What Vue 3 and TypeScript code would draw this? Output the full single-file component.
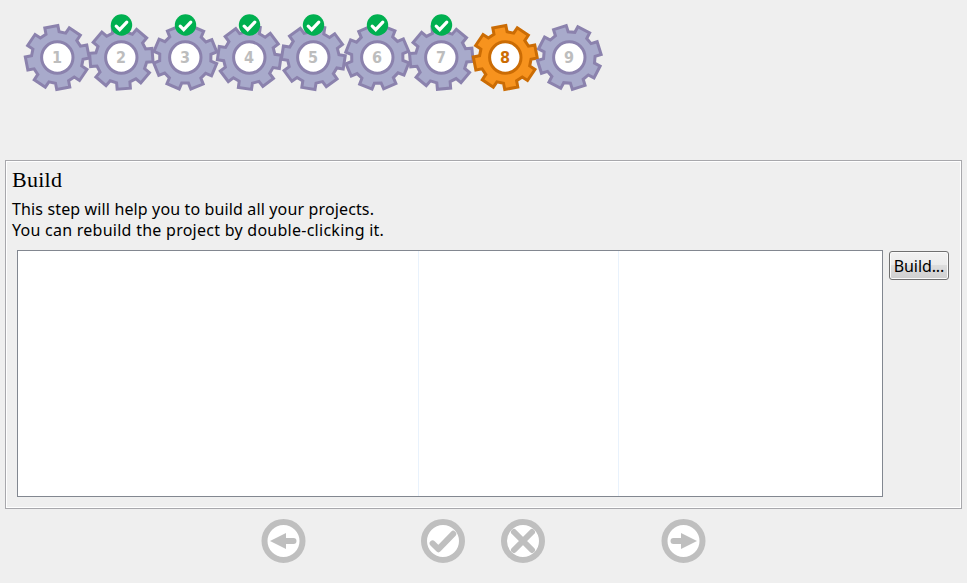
<script setup lang="ts">
interface Step {
  id: number
  rotation: number
  done: boolean
  current: boolean
}

const rotations: number[] = [-11, -4.5, -22, 8, 9, 21.5, -5, -11, -17.5]
const currentStep = 8

const steps: Step[] = rotations.map((rotation, i) => ({
  id: i + 1,
  rotation,
  done: i > 0 && i + 1 < currentStep,
  current: i + 1 === currentStep,
}))

function gearPoints(teeth: number): string {
  const corners: [number, number][] = [
    [25.8, -15],
    [32, -12],
    [32, 12],
    [25.8, 15],
  ]
  const points: string[] = []
  for (let t = 0; t < teeth; t++) {
    for (const [radius, offset] of corners) {
      const angle = ((t * 360) / teeth + offset - 90) * (Math.PI / 180)
      points.push(`${(radius * Math.cos(angle)).toFixed(2)},${(radius * Math.sin(angle)).toFixed(2)}`)
    }
  }
  return points.join(' ')
}

const gear = gearPoints(8)
</script>

<template>
  <main class="wizard">
    <nav class="steps">
      <div v-for="step in steps" :key="step.id" class="step" :class="{ current: step.current }">
        <svg class="gear" viewBox="-35.3 -49.5 70 84" width="70" height="84">
          <polygon class="body" :points="gear" :transform="`rotate(${step.rotation})`" />
          <circle class="hub" r="15.7" />
          <text class="number" x="-0.3" y="5.5" text-anchor="middle">{{ step.id }}</text>
          <g v-if="step.done" transform="translate(0.2 -32.5)">
            <circle class="badge" r="10.7" />
            <path class="tick" d="M-5.3 1.2 L-1.8 4.6 L5.3 -2.9" />
          </g>
        </svg>
      </div>
    </nav>

    <section class="panel">
      <h1 class="title">Build</h1>
      <p class="text"><span class="line first">This step will help you to build all your projects.</span><span class="line second">You can rebuild the project by double-clicking it.</span></p>
      <div class="content">
        <div class="table">
          <div class="column"></div>
          <div class="column"></div>
          <div class="column"></div>
        </div>
        <button class="build" type="button">Build...</button>
      </div>
    </section>

    <footer class="controls">
      <button class="round" type="button" aria-label="Previous">
        <svg viewBox="-21.5 -22 44 44" width="44" height="44">
          <circle class="ring" r="19" />
          <path class="solid" d="M-13.5 0 L2.5 -8 V-3 H10 A3 3 0 0 1 10 3 H2.5 V8 Z" />
        </svg>
      </button>
      <button class="round finish" type="button" aria-label="Finish">
        <svg viewBox="-22 -22 44 44" width="44" height="44">
          <circle class="ring" r="19" />
          <path class="mark" d="M-10.4 2.4 L-4.6 8.2 L10.2 -7.2" />
        </svg>
      </button>
      <button class="round cancel" type="button" aria-label="Cancel">
        <svg viewBox="-22 -22 44 44" width="44" height="44">
          <circle class="ring" r="19" />
          <path class="mark" d="M-9 -9 L9 9 M9 -9 L-9 9" />
        </svg>
      </button>
      <button class="round next" type="button" aria-label="Next">
        <svg viewBox="-21.5 -22 44 44" width="44" height="44">
          <circle class="ring" r="19" />
          <path class="solid" d="M13.5 0 L-2.5 -8 V-3 H-10 A3 3 0 0 0 -10 3 H-2.5 V8 Z" />
        </svg>
      </button>
    </footer>
  </main>
</template>

<style>
body {
  margin: 0;
  background: #efefef;
}
</style>

<style scoped>
.wizard {
  width: 967px;
  height: 583px;
  box-sizing: border-box;
  overflow: hidden;
  display: flex;
  flex-direction: column;
  background: #efefef;
  color: #000;
  font-family: "Noto Sans", "Open Sans", sans-serif;
}
.steps {
  display: flex;
  height: 160px;
  box-sizing: border-box;
  padding: 8px 0 0 25px;
  flex: none;
}
.step {
  width: 64px;
  flex: none;
}
.gear {
  display: block;
  margin-left: -3px;
  overflow: visible;
}
.body {
  fill: #a8aacb;
  stroke: #8b82ad;
  stroke-width: 3;
}
.hub {
  fill: #fff;
  stroke: #8b82ad;
  stroke-width: 3;
}
.number {
  fill: #bdbdbd;
  font: bold 16px "DejaVu Sans Condensed", "DejaVu Sans", sans-serif;
}
.current .body {
  fill: #f7931e;
  stroke: #cb6c04;
}
.current .hub {
  stroke: #cb6c04;
}
.current .number {
  fill: #cb6c04;
}
.badge {
  fill: #00b050;
}
.tick {
  fill: none;
  stroke: #fff;
  stroke-width: 3.2;
  stroke-linecap: round;
}
.panel {
  flex: none;
  width: 957px;
  height: 349px;
  margin-left: 5px;
  box-sizing: border-box;
  border: 1px solid #a8a8ac;
  box-shadow: inset 0 0 0 1px #fff;
  padding: 5px 12px 0 6px;
}
.title {
  margin: 0;
  height: 33px;
  font: 400 22px/28px "Liberation Serif", serif;
  letter-spacing: 0.25px;
}
.text {
  margin: 0;
  height: 50px;
  font-size: 16px;
  line-height: 21px;
}
.line {
  display: block;
  width: max-content;
  white-space: nowrap;
}
.first {
  letter-spacing: 0.137px;
}
.second {
  letter-spacing: 0.26px;
}
.content {
  display: flex;
  align-items: flex-start;
  gap: 6px;
  padding: 1px 0 0 5px;
}
.table {
  box-sizing: border-box;
  width: 866px;
  height: 247px;
  border: 1px solid #828790;
  background: #fff;
  display: grid;
  grid-template-columns: 401px 200px 1fr;
}
.column {
  border-right: 1px solid #e9f2fc;
}
.column:last-child {
  border-right: 0;
}
.build {
  box-sizing: border-box;
  width: 60px;
  height: 29px;
  margin-top: 1px;
  padding: 2px 0 0;
  border: 1px solid #707070;
  border-radius: 3px;
  box-shadow: inset 0 0 0 1px #fafafa;
  background: linear-gradient(#f2f2f2 0%, #ebebeb 50%, #dddddd 50%, #cfcfcf 100%);
  color: #000;
  font: 16px/25px "Noto Sans", "Open Sans", sans-serif;
  letter-spacing: -0.1px;
  white-space: nowrap;
}
.controls {
  display: flex;
  padding: 10px 0 0 262px;
}
.round {
  padding: 0;
  border: 0;
  background: none;
  width: 44px;
  height: 44px;
}
.round svg {
  display: block;
  overflow: visible;
}
.finish {
  margin-left: 115px;
}
.cancel {
  margin-left: 36px;
}
.next {
  margin-left: 117px;
}
.ring {
  fill: #fff;
  stroke: #bfbfbf;
  stroke-width: 6;
}
.solid {
  fill: #bfbfbf;
}
.mark {
  fill: none;
  stroke: #bfbfbf;
  stroke-width: 6;
  stroke-linecap: round;
  stroke-linejoin: round;
}
</style>
